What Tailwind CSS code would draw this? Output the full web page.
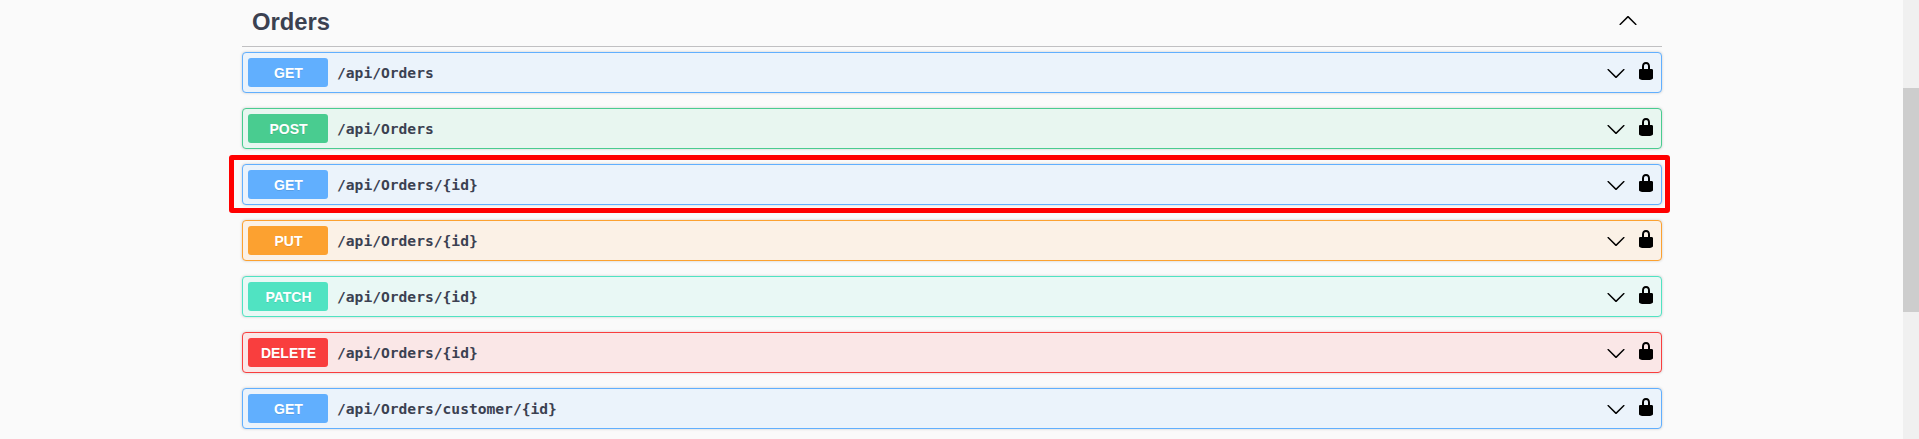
<!DOCTYPE html>
<html lang="en">
<head>
<meta charset="utf-8">
<title>Orders</title>
<script src="https://cdn.jsdelivr.net/npm/@tailwindcss/browser@4"></script>
</head>
<body class="flex h-[439px] overflow-hidden bg-[#fafafa] font-['Liberation_Sans',Arial,sans-serif] text-[#3b4151]">
<svg class="hidden">
  <symbol id="down" viewBox="0 0 20 20"><path d="M17.418 6.109c.272-.268.709-.268.979 0s.271.701 0 .969l-7.908 7.83c-.27.268-.707.268-.979 0l-7.908-7.83c-.27-.268-.27-.701 0-.969.271-.268.709-.268.979 0L10 13.25z"/></symbol>
  <symbol id="up" viewBox="0 0 20 20"><path d="M17.418 14.908c.272.268.709.268.979 0s.271-.701 0-.969l-7.908-7.83c-.27-.268-.707-.268-.979 0l-7.908 7.83c-.27.268-.27.701 0 .969.271.268.709.268.979 0L10 7.767z"/></symbol>
  <symbol id="lock" viewBox="0 0 20 20"><path d="M15.8 8H14V5.6C14 2.703 12.665 1 10 1 7.334 1 6 2.703 6 5.6V8H4c-.553 0-1 .646-1 1.199V17c0 .549.428 1.139.951 1.307l1.197.387C5.672 18.861 6.55 19 7.1 19h5.8c.549 0 1.428-.139 1.951-.307l1.196-.387c.524-.167.953-.757.953-1.306V9.199C17 8.646 16.352 8 15.8 8zM12 8H8V5.199C8 3.754 8.797 3 10 3c1.203 0 2 .754 2 2.199V8z"/></symbol>
</svg>
<main class="flex-1 pl-[242px]">
  <section class="w-[1420px]">
    <header class="mb-[5px] flex h-[47px] items-start border-b border-[#c0c0c2] pr-6 pl-2.5">
      <h3 class="flex-1 pt-2 text-[23.8px] leading-7 font-bold">Orders</h3>
      <svg class="mt-2.5 size-5 text-black" fill="currentColor"><use href="#up"/></svg>
    </header>
    <div class="flex flex-col gap-[15px]">
      <div class="flex h-[41px] items-center rounded border border-[#61affe] bg-[#ebf3fb] pr-[5px] pl-[5px] shadow-[0_0_3px_rgba(0,0,0,0.19)]">
        <span class="h-[29px] w-20 rounded-[3px] bg-[#61affe] pt-px pl-px text-center text-sm leading-[29px] font-bold text-white [text-shadow:0_1px_0_rgba(0,0,0,0.1)]">GET</span>
        <span class="flex-1 pl-[9px] font-['DejaVu_Sans_Mono',monospace] text-[14.62px] leading-5 font-bold">/api/Orders</span>
        <svg class="mr-2.5 size-5 text-black" fill="currentColor"><use href="#down"/></svg>
        <svg class="-mt-[3px] size-5 text-black" fill="currentColor"><use href="#lock"/></svg>
      </div>
      <div class="flex h-[41px] items-center rounded border border-[#49cc90] bg-[#e8f6f0] pr-[5px] pl-[5px] shadow-[0_0_3px_rgba(0,0,0,0.19)]">
        <span class="h-[29px] w-20 rounded-[3px] bg-[#49cc90] pt-px pl-px text-center text-sm leading-[29px] font-bold text-white [text-shadow:0_1px_0_rgba(0,0,0,0.1)]">POST</span>
        <span class="flex-1 pl-[9px] font-['DejaVu_Sans_Mono',monospace] text-[14.62px] leading-5 font-bold">/api/Orders</span>
        <svg class="mr-2.5 size-5 text-black" fill="currentColor"><use href="#down"/></svg>
        <svg class="-mt-[3px] size-5 text-black" fill="currentColor"><use href="#lock"/></svg>
      </div>
      <div class="relative flex h-[41px] items-center rounded border border-[#61affe] bg-[#ebf3fb] pr-[5px] pl-[5px] shadow-[0_0_3px_rgba(0,0,0,0.19)]">
        <span class="h-[29px] w-20 rounded-[3px] bg-[#61affe] pt-px pl-px text-center text-sm leading-[29px] font-bold text-white [text-shadow:0_1px_0_rgba(0,0,0,0.1)]">GET</span>
        <span class="flex-1 pl-[9px] font-['DejaVu_Sans_Mono',monospace] text-[14.62px] leading-5 font-bold">/api/Orders/{id}</span>
        <svg class="mr-2.5 size-5 text-black" fill="currentColor"><use href="#down"/></svg>
        <svg class="-mt-[3px] size-5 text-black" fill="currentColor"><use href="#lock"/></svg>
        <div class="absolute -top-[10px] -left-[14px] h-[58px] w-[1441px] rounded-[3px] border-5 border-[#ff0000]"></div>
      </div>
      <div class="flex h-[41px] items-center rounded border border-[#fca130] bg-[#fbf1e6] pr-[5px] pl-[5px] shadow-[0_0_3px_rgba(0,0,0,0.19)]">
        <span class="h-[29px] w-20 rounded-[3px] bg-[#fca130] pt-px pl-px text-center text-sm leading-[29px] font-bold text-white [text-shadow:0_1px_0_rgba(0,0,0,0.1)]">PUT</span>
        <span class="flex-1 pl-[9px] font-['DejaVu_Sans_Mono',monospace] text-[14.62px] leading-5 font-bold">/api/Orders/{id}</span>
        <svg class="mr-2.5 size-5 text-black" fill="currentColor"><use href="#down"/></svg>
        <svg class="-mt-[3px] size-5 text-black" fill="currentColor"><use href="#lock"/></svg>
      </div>
      <div class="flex h-[41px] items-center rounded border border-[#50e3c2] bg-[#e9f8f5] pr-[5px] pl-[5px] shadow-[0_0_3px_rgba(0,0,0,0.19)]">
        <span class="h-[29px] w-20 rounded-[3px] bg-[#50e3c2] pt-px pl-px text-center text-sm leading-[29px] font-bold text-white [text-shadow:0_1px_0_rgba(0,0,0,0.1)]">PATCH</span>
        <span class="flex-1 pl-[9px] font-['DejaVu_Sans_Mono',monospace] text-[14.62px] leading-5 font-bold">/api/Orders/{id}</span>
        <svg class="mr-2.5 size-5 text-black" fill="currentColor"><use href="#down"/></svg>
        <svg class="-mt-[3px] size-5 text-black" fill="currentColor"><use href="#lock"/></svg>
      </div>
      <div class="flex h-[41px] items-center rounded border border-[#f93e3e] bg-[#fae7e7] pr-[5px] pl-[5px] shadow-[0_0_3px_rgba(0,0,0,0.19)]">
        <span class="h-[29px] w-20 rounded-[3px] bg-[#f93e3e] pt-px pl-px text-center text-sm leading-[29px] font-bold text-white [text-shadow:0_1px_0_rgba(0,0,0,0.1)]">DELETE</span>
        <span class="flex-1 pl-[9px] font-['DejaVu_Sans_Mono',monospace] text-[14.62px] leading-5 font-bold">/api/Orders/{id}</span>
        <svg class="mr-2.5 size-5 text-black" fill="currentColor"><use href="#down"/></svg>
        <svg class="-mt-[3px] size-5 text-black" fill="currentColor"><use href="#lock"/></svg>
      </div>
      <div class="flex h-[41px] items-center rounded border border-[#61affe] bg-[#ebf3fb] pr-[5px] pl-[5px] shadow-[0_0_3px_rgba(0,0,0,0.19)]">
        <span class="h-[29px] w-20 rounded-[3px] bg-[#61affe] pt-px pl-px text-center text-sm leading-[29px] font-bold text-white [text-shadow:0_1px_0_rgba(0,0,0,0.1)]">GET</span>
        <span class="flex-1 pl-[9px] font-['DejaVu_Sans_Mono',monospace] text-[14.62px] leading-5 font-bold">/api/Orders/customer/{id}</span>
        <svg class="mr-2.5 size-5 text-black" fill="currentColor"><use href="#down"/></svg>
        <svg class="-mt-[3px] size-5 text-black" fill="currentColor"><use href="#lock"/></svg>
      </div>
    </div>
  </section>
</main>
<aside class="w-4 bg-[#f0f0f0] pt-[88px]"><div class="h-56 bg-[#cdcdcd]"></div></aside>
</body>
</html>
